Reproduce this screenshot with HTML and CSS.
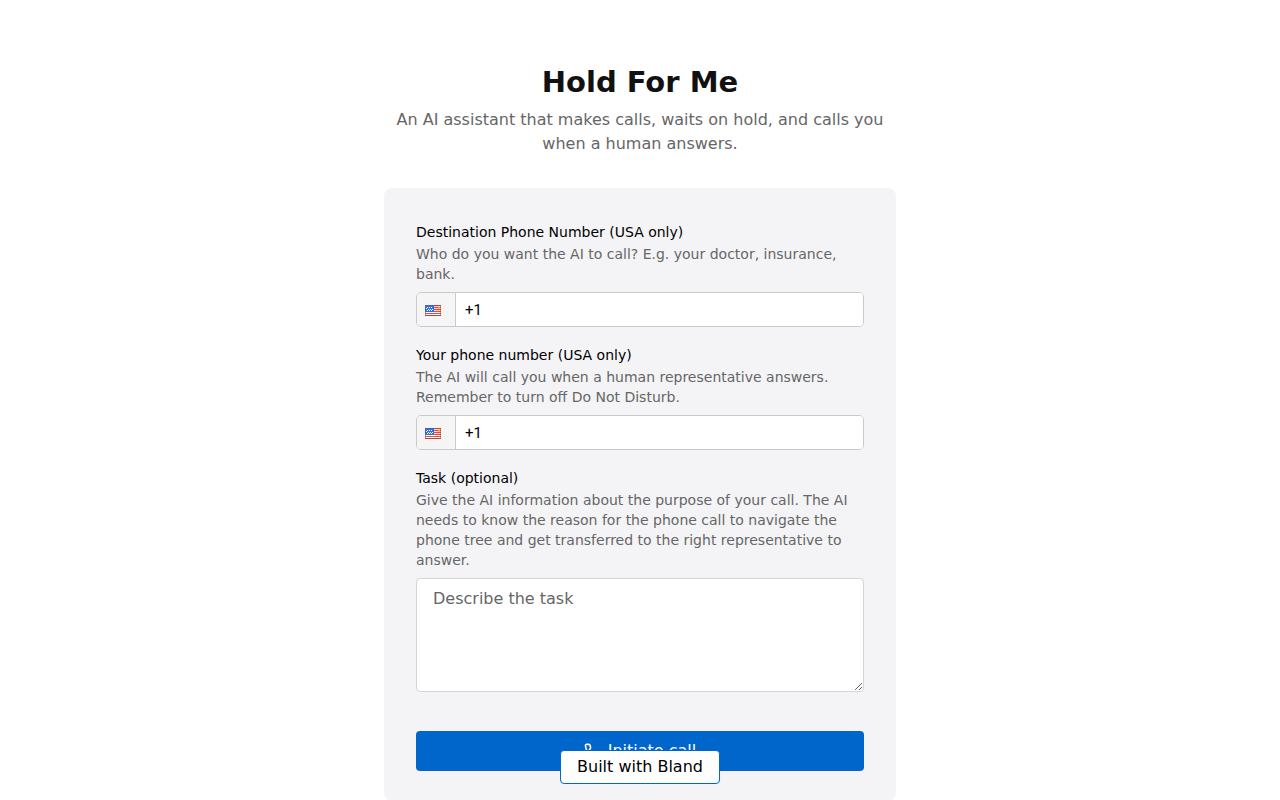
FILE: index.html
```html
<!DOCTYPE html>
<html lang="en">
<head>
<meta charset="utf-8">
<meta name="viewport" content="width=device-width, initial-scale=1">
<title>Hold For Me</title>
<link rel="stylesheet" href="styles.css">
</head>
<body>
<svg class="defs" aria-hidden="true">
  <symbol id="flag-us" viewBox="0 0 16 11">
    <rect width="16" height="11" fill="#fff"/>
    <path d="M0 .5h16M0 2.5h16M0 4.5h16M0 6.5h16M0 8.5h16M0 10.5h16" stroke="#f0453a"/>
    <path d="M0 .5h16M0 10.5h16" stroke="#b5433f"/>
    <path d="M9 1h7v1H9zM9 3h7v1H9zM9 5h7v1H9z" fill="#fbd9d3"/>
    <rect width="9" height="7" fill="#2f6fe0"/>
    <path d="M0 .5h9M.5 0v7" stroke="#4a63ad"/>
    <path d="M2 2h1v1H2zM4 2h1v1H4zM6 2h1v1H6zM1 3h1v1H1zM3 4h1v1H3zM5 4h1v1H5zM7 4h1v1H7zM2 5h1v1H2zM4 5h1v1H4zM6 5h1v1H6z" fill="#fff"/>
    <path d="M.5 7v4M15.5 0v11" stroke="#8d4a52" stroke-opacity=".55"/>
    <path d="M13 2h2v2h-2z" fill="#ffb640" fill-opacity=".6"/>
  </symbol>
</svg>
<main class="page">
  <header class="intro">
    <h1 class="title">Hold For Me</h1>
    <p class="tagline">An AI assistant that makes calls, waits on hold, and calls you when a human answers.</p>
  </header>
  <form class="card">
    <div class="field">
      <label class="label" for="destination">Destination Phone Number (USA only)</label>
      <p class="hint">Who do you want the AI to call? E.g. your doctor, insurance, bank.</p>
      <div class="phone">
        <button class="country" type="button" aria-label="United States"><svg class="flag"><use href="#flag-us"/></svg></button>
        <input class="number" id="destination" type="tel" value="+1">
      </div>
    </div>
    <div class="field">
      <label class="label" for="own">Your phone number (USA only)</label>
      <p class="hint">The AI will call you when a human representative answers. Remember to turn off Do Not Disturb.</p>
      <div class="phone">
        <button class="country" type="button" aria-label="United States"><svg class="flag"><use href="#flag-us"/></svg></button>
        <input class="number" id="own" type="tel" value="+1">
      </div>
    </div>
    <div class="field">
      <label class="label" for="task">Task (optional)</label>
      <p class="hint">Give the AI information about the purpose of your call. The AI needs to know the reason for the phone call to navigate the phone tree and get transferred to the right representative to answer.</p>
      <textarea class="task" id="task" rows="4" placeholder="Describe the task"></textarea>
    </div>
    <button class="submit" type="submit">
      <svg class="icon" viewBox="0 0 24 24" fill="none" stroke="currentColor" stroke-width="2.4" stroke-linecap="round" stroke-linejoin="round" aria-hidden="true"><path d="M22 16.92v3a2 2 0 0 1-2.18 2 19.79 19.79 0 0 1-8.63-3.07 19.5 19.5 0 0 1-6-6 19.79 19.79 0 0 1-3.07-8.67A2 2 0 0 1 4.11 2h3a2 2 0 0 1 2 1.72 12.84 12.84 0 0 0 .7 2.81 2 2 0 0 1-.45 2.11L8.09 9.91a16 16 0 0 0 6 6l1.27-1.27a2 2 0 0 1 2.11-.45 12.84 12.84 0 0 0 2.81.7A2 2 0 0 1 22 16.92z"/></svg>
      <span>Initiate call</span>
    </button>
  </form>
</main>
<a class="badge" href="#">Built with Bland</a>
</body>
</html>
```
FILE: styles.css
```css
* { box-sizing: border-box; }
body {
  margin: 0;
  background: #fff;
  color: #000;
  font: 16px/24px "DejaVu Sans", sans-serif;
}
h1, p { margin: 0; }
button, input, textarea { font: inherit; margin: 0; }
.defs { position: absolute; width: 0; height: 0; }
.page {
  max-width: 512px;
  margin: 0 auto;
  padding-top: 64px;
}
.intro {
  display: flex;
  flex-direction: column;
  gap: 8px;
  margin-bottom: 32px;
  text-align: center;
}
.title {
  font-size: 29px;
  line-height: 36px;
  font-weight: 700;
  color: #111;
}
.tagline { color: #666; }
.card {
  display: flex;
  flex-direction: column;
  gap: 16px;
  padding: 32px 32px 30px;
  border-radius: 8px;
  background: #f4f4f6;
}
.field { display: flex; flex-direction: column; }
.label { font-size: 14px; line-height: 24px; }
.hint {
  margin-bottom: 8px;
  font-size: 14px;
  line-height: 20px;
  color: #666;
}
.phone {
  display: flex;
  height: 35px;
  border: 1px solid #cacaca;
  border-radius: 5px;
  background: #fff;
  overflow: hidden;
}
.country {
  display: flex;
  align-items: center;
  width: 39px;
  padding: 2px 8px 0;
  border: 0;
  border-right: 1px solid #cacaca;
  background: #f5f5f5;
}
.flag { width: 16px; height: 11px; }
.number {
  flex: 1;
  min-width: 0;
  padding: 1px 9px 0;
  border: 0;
  background: #fff;
  color: #000;
  font: 15px/25px Roboto, sans-serif;
}
.task {
  display: block;
  width: 100%;
  height: 114px;
  padding: 8px 16px;
  border: 1px solid #d5d5d8;
  border-radius: 4px;
  background: #fff;
  resize: vertical;
}
.task::placeholder { color: #666; }
.submit {
  display: flex;
  align-items: center;
  justify-content: center;
  gap: 8px;
  height: 40px;
  margin-top: 23px;
  border: 0;
  border-radius: 4px;
  background: #06c;
  color: #fff;
}
.icon { width: 16px; height: 16px; }
.badge {
  position: fixed;
  bottom: 16px;
  left: 50%;
  transform: translateX(-50%);
  padding: 4px 16px;
  border: 1px solid #06c;
  border-radius: 4px;
  background: #fff;
  color: #000;
  white-space: nowrap;
  text-decoration: none;
}
```
